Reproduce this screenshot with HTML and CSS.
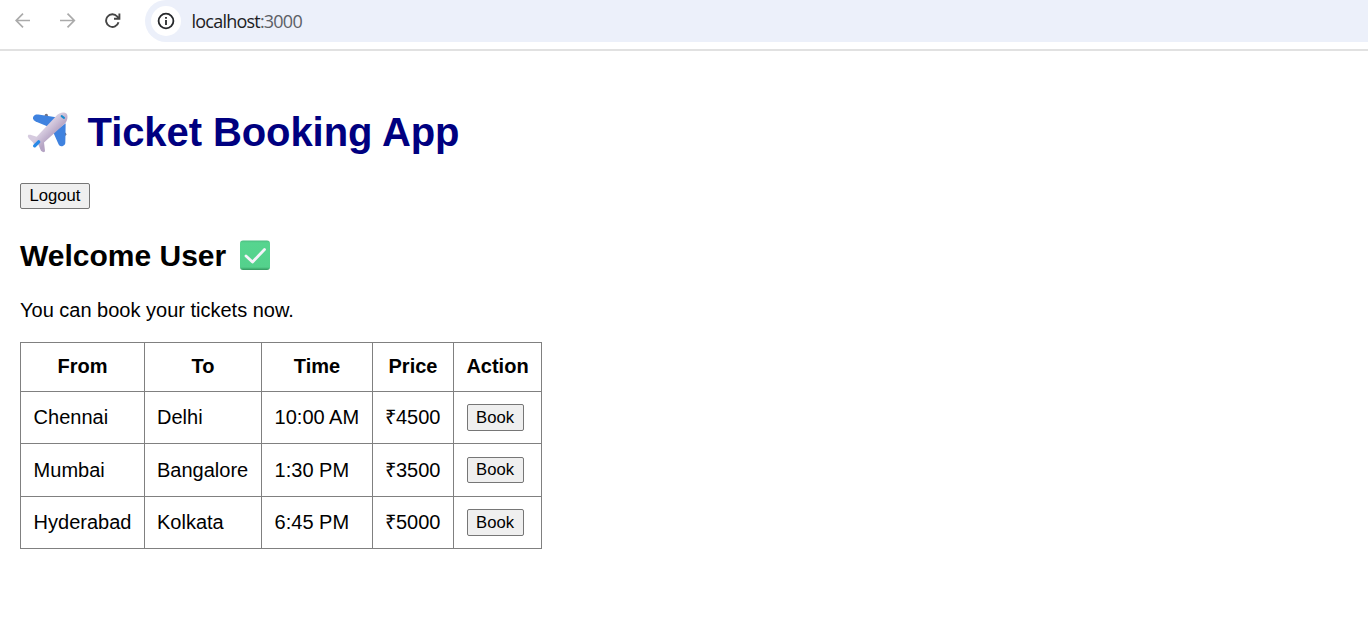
FILE: index.html
```html
<!DOCTYPE html>
<html lang="en">
<head>
<meta charset="utf-8">
<title>Ticket Booking App</title>
<link rel="stylesheet" href="styles.css">
</head>
<body>
<header class="toolbar">
  <svg class="nav back" viewBox="0 0 16 16"><path d="M15 7.500H1.500M8 .7L1.200 7.500L8 14.300"/></svg>
  <svg class="nav forward" viewBox="0 0 16 16"><path d="M0 7.500H14M7.500 .7L14.300 7.500L7.500 14.300"/></svg>
  <svg class="nav reload" viewBox="0 0 16 16"><path d="M13.500 9.200A6.300 6.300 0 1 1 12.200 3.500L13.700 5"/><path d="M14.400 .4V5.700H9"/></svg>
  <div class="address">
    <span class="site-info"><svg viewBox="0 0 18 18"><circle cx="9" cy="9" r="7.400"/><path d="M9 8V13M9 5V6.800"/></svg></span>
    <span class="url">localhost<span class="port">:3000</span></span>
  </div>
</header>
<main class="page">
  <h1 class="title">
    <svg class="plane" viewBox="36 34.5 123 123">
      <defs>
        <linearGradient id="body" gradientUnits="userSpaceOnUse" x1="98" y1="78" x2="120" y2="100"><stop offset="0" stop-color="#d6cbdf"/><stop offset="1" stop-color="#b5a4c4"/></linearGradient>
      </defs>
      <circle cx="94" cy="45" r="5" fill="#77727c"/><circle cx="149" cy="101" r="5" fill="#77727c"/>
      <path d="M63 42Q53 46 54 54Q55 60 62 63L100 79L128 51L70 42Z" fill="#3f82df"/>
      <path d="M115 96L131 132Q134 139 142 137Q151 134 151 126L152 68Z" fill="#3f82df"/>
      <path d="M127 43C135 35 148 33 155 40C160 48 157 62 150 69L87 126L90 151Q90 157 82 154Q77 151 76 146L70 132Q65 136 58 133L54 126L41 113Q36 107 40 103L46 103L65 109Z" fill="url(#body)"/>
      <path d="M59 136L71 124" stroke="#2789e6" stroke-width="10" stroke-linecap="round"/>
      <path d="M140 47L147 52" stroke="#168bcf" stroke-width="6" stroke-linecap="round"/>
    </svg>
    <span>Ticket Booking App</span>
  </h1>
  <button class="button logout">Logout</button>
  <h2 class="welcome"><span class="greeting">Welcome User</span>
    <svg class="check" viewBox="0 0 30 30"><defs><linearGradient id="green" x1="0" y1="0" x2="0" y2="1"><stop offset="0" stop-color="#4dbd82"/><stop offset=".08" stop-color="#56d58f"/><stop offset=".9" stop-color="#54d18c"/><stop offset="1" stop-color="#35965f"/></linearGradient></defs><rect y=".5" width="30" height="29.500" rx="3" fill="url(#green)"/><path d="M6 16L12.500 22L24.500 9.500" fill="none" stroke="#f5f3fa" stroke-width="2.800" stroke-linecap="round" stroke-linejoin="round"/></svg>
  </h2>
  <p class="intro">You can book your tickets now.</p>
  <table class="tickets">
    <colgroup><col class="from"><col class="to"><col class="time"><col class="price"><col class="action"></colgroup>
    <thead><tr><th>From</th><th>To</th><th>Time</th><th>Price</th><th>Action</th></tr></thead>
    <tbody>
      <tr><td>Chennai</td><td>Delhi</td><td>10:00 AM</td><td>₹4500</td><td><button class="button book">Book</button></td></tr>
      <tr><td>Mumbai</td><td>Bangalore</td><td>1:30 PM</td><td>₹3500</td><td><button class="button book">Book</button></td></tr>
      <tr><td>Hyderabad</td><td>Kolkata</td><td>6:45 PM</td><td>₹5000</td><td><button class="button book">Book</button></td></tr>
    </tbody>
  </table>
</main>
</body>
</html>
```
FILE: styles.css
```css
* { box-sizing: border-box; }
body { margin: 0; background: #fff; color: #000; font: 20px/23px "Liberation Sans", Arial, sans-serif; }
.toolbar { display: flex; align-items: flex-start; height: 51px; padding-left: 15px; border-bottom: 2px solid #e1e1e1; }
.nav { width: 16px; height: 16px; margin: 13px 29px 0 0; fill: none; stroke: #aaa; stroke-width: 1.7; }
.reload { margin-right: 24px; stroke: #454545; stroke-width: 1.9; }
.address { display: flex; align-items: center; flex: 1; height: 42px; padding-left: 6px; background: #ecf0fa; border-radius: 21px 0 0 21px; }
.site-info { display: flex; align-items: center; justify-content: center; width: 30px; height: 30px; border-radius: 50%; background: #fff; }
.site-info svg { width: 18px; height: 18px; fill: none; stroke: #26282b; stroke-width: 1.8; }
.url { margin-left: 10.5px; font: 18px/24px "Open Sans", "Noto Sans", sans-serif; letter-spacing: -.78px; color: #202124; }
.port { color: #5c6066; }
.page { padding: 58px 20px 0; }
.title { display: flex; align-items: center; height: 46px; margin: 0 0 28px; color: #000080; font-size: 40px; line-height: 46px; letter-spacing: -.08px; white-space: nowrap; }
.plane { width: 41px; height: 41px; margin: 0 19.5px 0 7px; overflow: visible; }
.button { display: block; height: 26px; padding: 0; border: 1px solid #767676; border-radius: 2px; background: #efefef; color: #000; font: 16.667px/22px "Liberation Sans", Arial, sans-serif; }
.logout { width: 70px; }
.welcome { display: flex; align-items: center; height: 34px; margin: 29px 0 27px; font-size: 30px; line-height: 34px; white-space: nowrap; }
.greeting { padding-top: 1px; }
.check { width: 30px; height: 30px; margin: 0 0 0 14px; }
.intro { margin: 0 0 20px; }
.tickets { width: 522px; table-layout: fixed; border-collapse: collapse; }
.from { width: 124px; }
.to { width: 117px; }
.time { width: 111px; }
.price { width: 81px; }
.action { width: 88px; }
.tickets th, .tickets td { padding: 0 12px; border: 1px solid #808080; text-align: left; white-space: nowrap; }
.tickets th { height: 49px; padding-bottom: 2px; text-align: center; }
.tickets td { height: 52px; }
.tickets td:nth-child(odd) { padding-left: 12.6px; padding-right: 11px; }
.tickets tr:nth-child(2) td { height: 53px; }
.book { width: 57px; height: 27px; }
.tickets tr:nth-child(2) .book { height: 26px; }
```
